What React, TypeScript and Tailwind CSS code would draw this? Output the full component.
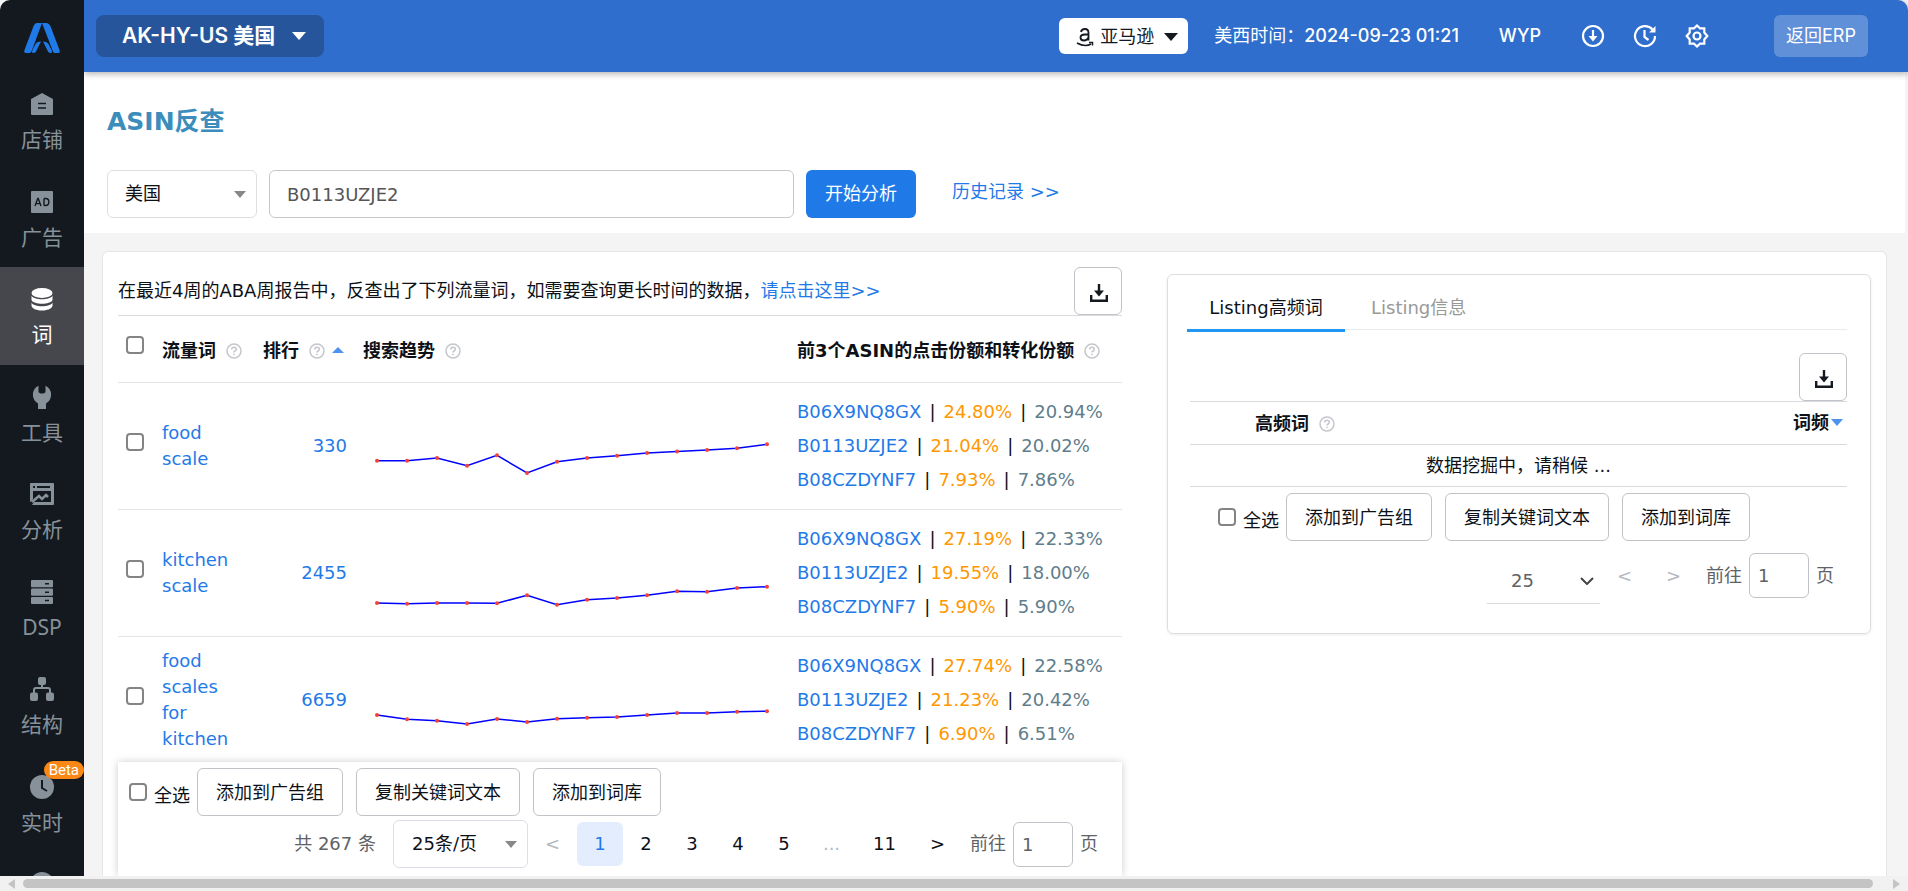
import type { ReactNode } from "react";

const navItems = [
  { label: "店铺", icon: "store" },
  { label: "广告", icon: "ad" },
  { label: "词", icon: "word", active: true },
  { label: "工具", icon: "tool" },
  { label: "分析", icon: "chart" },
  { label: "DSP", icon: "dsp" },
  { label: "结构", icon: "tree" },
  { label: "实时", icon: "clock", badge: "Beta" },
];

const rows = [
  {
    word: "food scale",
    rank: 330,
    trend: [64.7, 64.7, 62, 69.7, 59.3, 77, 65.7, 62, 59.8, 57, 55.5, 54, 52.3, 48.3],
    asins: [
      ["B06X9NQ8GX", "24.80%", "20.94%"],
      ["B0113UZJE2", "21.04%", "20.02%"],
      ["B08CZDYNF7", "7.93%", "7.86%"],
    ],
  },
  {
    word: "kitchen scale",
    rank: 2455,
    trend: [80, 80.7, 80, 80, 80.3, 72.3, 81.7, 76.7, 75, 72.3, 68.3, 68.7, 65, 63.7],
    asins: [
      ["B06X9NQ8GX", "27.19%", "22.33%"],
      ["B0113UZJE2", "19.55%", "18.00%"],
      ["B08CZDYNF7", "5.90%", "5.90%"],
    ],
  },
  {
    word: "food scales for kitchen",
    rank: 6659,
    trend: [65, 69.3, 70.7, 74, 69, 72, 68.7, 67.7, 67, 65, 63, 63, 61.7, 61.3],
    asins: [
      ["B06X9NQ8GX", "27.74%", "22.58%"],
      ["B0113UZJE2", "21.23%", "20.42%"],
      ["B08CZDYNF7", "6.90%", "6.51%"],
    ],
  },
];

const navIcons: Record<string, ReactNode> = {
  store: (
    <>
      <path d="M12 1 22 6.5a1 1 0 0 1 1 1V22a1 1 0 0 1-1 1H2a1 1 0 0 1-1-1V7.5a1 1 0 0 1 1-1Z" fill="currentColor" />
      <path d="M8 11.5h8M8 16h8" stroke="#14191f" strokeWidth="1.5" />
    </>
  ),
  ad: (
    <>
      <rect x="1" y="1" width="22" height="22" rx="1" fill="currentColor" />
      <path
        d="M5 16l2.8-7.5h.4L11 16M6 13.6h4M14 8.5v7M14 8.5h1.5c4.500 0 4.500 7 0 7H14"
        stroke="#14191f"
        strokeWidth="1.4"
        fill="none"
      />
    </>
  ),
  word: (
    <>
      <ellipse cx="12" cy="6" rx="10.5" ry="5" fill="currentColor" />
      <path d="M1.5 8.5c2 5 19 5 21 0v4.5c-2 5-19 5-21 0Z" fill="currentColor" />
      <path d="M1.5 15.5c2 5 19 5 21 0V19c-2 6-19 6-21 0Z" fill="currentColor" />
    </>
  ),
  tool: (
    <path
      d="M8.500 .8v6.400l2 1.300h3l2-1.300V.8A10 10 0 0 1 16 18.500v5a1 1 0 0 1-1 1H9a1 1 0 0 1-1-1v-5A10 10 0 0 1 8.500 .8Z"
      fill="currentColor"
    />
  ),
  chart: (
    <>
      <path
        fillRule="evenodd"
        d="M1 1h22a1 1 0 0 1 1 1v20a1 1 0 0 1-1 1H2l2-3h17V9H3v8l-2 3a1 1 0 0 1-1-1V2a1 1 0 0 1 1-1Zm2 3v2h2V4Zm4 0v2h13V4Z"
        fill="currentColor"
      />
      <path d="M2 20l7-6 3 3 4-4 2 2" stroke="currentColor" strokeWidth="2.5" fill="none" />
    </>
  ),
  dsp: (
    <>
      <rect x="1" y="0" width="22" height="7.3" rx="1" fill="currentColor" />
      <rect x="1" y="8.5" width="22" height="7.3" rx="1" fill="currentColor" />
      <rect x="1" y="17" width="22" height="7" rx="1" fill="currentColor" />
      <path d="M15 3.8h4M15 12.2h4M15 20.5h4" stroke="#14191f" strokeWidth="1.5" />
    </>
  ),
  tree: (
    <>
      <rect x="8" y="0" width="8" height="8" rx="2" fill="currentColor" />
      <rect x="0" y="15.5" width="8" height="8.5" rx="2" fill="currentColor" />
      <rect x="16" y="15.5" width="8" height="8.5" rx="2" fill="currentColor" />
      <path d="M4 16v-3q0-2 2-2h12q2 0 2 2v3M12 7v4" stroke="currentColor" strokeWidth="2" fill="none" />
    </>
  ),
  clock: (
    <>
      <circle cx="12" cy="12" r="12" fill="currentColor" />
      <path d="M12 5v8l5 3" stroke="#14191f" strokeWidth="2" fill="none" />
    </>
  ),
};

function Sidebar() {
  return (
    <aside className="w-[84px] shrink-0 overflow-hidden rounded-tl-[10px] bg-[#14191f] font-['Noto_Sans','Noto_Sans_CJK_SC',sans-serif]">
      <div className="flex h-[72px] items-center justify-center pt-1">
        <svg viewBox="0 0 36 32" className="h-8 w-9" fill="#1f7ae8">
          <path d="M13 1h5L7.5 29.5Q6.5 31 5 31H2Q-.5 31 .5 28L9 5.5Q10.5 1 13 1Z" />
          <path d="M18 1h4q3.5 0 5 4.5L35.5 28q1 3-1.5 3h-3q-1.5 0-2-1.5Z" />
          <path d="M17 19.500 12 29.500Q11 31 9.500 31 7.500 31 8 29l3.500-7q1.500-2.500 5.500-2.500Z" />
          <path d="M19 19.500 24 29.500Q25 31 26.500 31 28.500 31 28 29l-3.500-7q-1.500-2.500-5.500-2.500Z" />
        </svg>
      </div>
      <nav className="grid h-[780px] grid-rows-8">
        {navItems.map((item) => (
          <a
            key={item.label}
            href="#"
            className={
              item.active
                ? "relative flex flex-col items-center bg-[#45474d] pt-5 text-white"
                : "relative flex flex-col items-center pt-5 text-[#87919a]"
            }
          >
            <svg viewBox="0 0 24 24" className="size-6">{navIcons[item.icon]}</svg>
            <span className="mt-[9px] text-[21px] leading-7">{item.label}</span>
            {item.badge && (
              <span className="absolute top-1.5 right-0 rounded-full bg-[#fa8816] px-[5px] font-[Roboto] text-[15px] leading-[18px] text-white">
                {item.badge}
              </span>
            )}
          </a>
        ))}
      </nav>
      <svg viewBox="0 0 24 24" className="mx-auto mt-5 size-6 text-[#87919a]">
        <circle cx="12" cy="12" r="12" fill="currentColor" />
      </svg>
    </aside>
  );
}

function Header() {
  return (
    <header className="relative z-10 flex h-[72px] shrink-0 items-center rounded-tr-[10px] bg-[#2f6ecc] pr-10 pl-3 font-[Inter,'Noto_Sans_CJK_SC',sans-serif] text-lg text-white shadow-[0_2px_6px_rgba(0,0,0,0.3)]">
      <button className="flex h-[42px] w-[228px] items-center gap-[17px] rounded-lg bg-[#26559b] pl-[26px] text-[21px] font-semibold">
        AK-HY-US 美国
        <svg viewBox="0 0 14 8" className="h-2 w-3.5" fill="currentColor"><path d="M0 0h14L7 8Z" /></svg>
      </button>
      <button className="ml-auto flex h-9 w-[129px] items-center gap-1.5 rounded-md bg-white pt-0.5 pl-[17px] text-[#14191f]">
        <svg viewBox="0 0 18 20" className="h-5 w-[18px]" fill="none" stroke="currentColor" strokeWidth="1.8">
          <path d="M5 5Q5.500 2 9 2t3.500 4v7.500M12.500 7.500H9q-4.500 0-4.500 3T8 13.500q3 0 4.500-3" />
          <path d="M1 16q8 4.500 14 1" strokeWidth="1.6" />
          <path d="M13 15.500h3.500v3" strokeWidth="1.5" />
        </svg>
        亚马逊
        <svg viewBox="0 0 14 8" className="ml-1 h-2 w-3.5" fill="currentColor"><path d="M0 0h14L7 8Z" /></svg>
      </button>
      <span className="ml-[26px]">美西时间：<span className="font-medium">2024-09-23 01:21</span></span>
      <span className="ml-10 font-medium">WYP</span>
      <div className="ml-10 flex gap-7">
        <svg viewBox="0 0 24 24" className="size-6" fill="none" stroke="currentColor" strokeWidth="2.2">
          <circle cx="12" cy="12" r="10" />
          <path d="M12 6v9" />
          <path d="M7.500 12h9L12 17.500Z" fill="currentColor" stroke="none" />
        </svg>
        <svg viewBox="0 0 24 24" className="size-6" fill="none" stroke="currentColor" strokeWidth="2.2">
          <path d="M19.500 5.500A10 10 0 1 0 22 12M11.500 6v7l4 3" />
          <path d="M22.500 2v6.500H16Z" fill="currentColor" stroke="none" />
        </svg>
        <svg viewBox="0 0 24 24" className="size-6" fill="none" stroke="currentColor" strokeWidth="2.2">
          <path d="M12 1.5l3 2.8h4.3v4.3l3 3.4-3 3.4v4.3H15l-3 2.8-3-2.8H4.7v-4.3l-3-3.4 3-3.4V4.3H9Z" />
          <circle cx="12" cy="12" r="3.5" />
        </svg>
      </div>
      <button className="ml-[65px] h-[42px] w-[94px] rounded-md bg-[#6090d7]">返回ERP</button>
    </header>
  );
}

function HelpIcon() {
  return (
    <svg viewBox="0 0 16 16" className="ml-2.5 inline size-4 align-[-2px] text-[#c4c6cb]" fill="none" stroke="currentColor" strokeWidth="1.5">
      <circle cx="8" cy="8" r="7" />
      <path d="M5.7 6.5q0-2.2 2.3-2.2t2.3 2q0 1-1.2 1.7T8 9.5M8 10.7v1.5" />
    </svg>
  );
}

function DownloadButton() {
  return (
    <button aria-label="下载" className="flex h-12 w-12 shrink-0 items-center justify-center rounded-md border border-[#c0c3c8] bg-white">
      <svg viewBox="0 0 18 18" className="mt-1 ml-0.5 size-[18px]" fill="none" stroke="#14191f" strokeWidth="2.4">
        <path d="M9 0v8M1.200 11v5.800h15.600V11" />
        <path d="M4 6.500h10L9 12.500Z" fill="#14191f" stroke="none" />
      </svg>
    </button>
  );
}

function Check({ id, label }: { id: string; label: string }) {
  return <input id={id} type="checkbox" aria-label={label} className="block size-[18px] appearance-none rounded-[4px] border-2 border-[#848484] bg-white" />;
}

function BulkActions({ id }: { id: string }) {
  return (
    <div className="flex items-center">
      <Check id={id} label="全选" />
      <label htmlFor={id} className="mt-2 mr-[7px] ml-[7px]">全选</label>
      <div className="flex gap-[13px]">
        {["添加到广告组", "复制关键词文本", "添加到词库"].map((text) => (
          <button key={text} className="h-12 rounded-md border border-[#c0c3c8] bg-white px-[18px] pt-0.5">{text}</button>
        ))}
      </div>
    </div>
  );
}

function PageJump({ id }: { id: string }) {
  return (
    <div className="flex items-center text-[#606266]">
      <label htmlFor={id}>前往</label>
      <input id={id} defaultValue="1" className="mx-[7px] h-[45px] w-[60px] rounded-md border border-[#c0c3c8] px-2" />
      <span>页</span>
    </div>
  );
}

function DropArrow() {
  return (
    <svg viewBox="0 0 12 7" className="pointer-events-none absolute top-[21px] right-[11px] h-[7px] w-3" fill="#888">
      <path d="M0 0h12L6 7Z" />
    </svg>
  );
}

function Trend({ values }: { values: number[] }) {
  const points = values.map((y, i) => [14 + i * 30, y]);
  return (
    <svg viewBox="0 0 420 100" className="h-[100px] w-[420px]">
      <polyline points={points.map((p) => p.join(",")).join(" ")} fill="none" stroke="#00f" strokeWidth="1.5" />
      {points.map(([x, y]) => (
        <circle key={x} cx={x} cy={y} r="2" fill="#f44336" />
      ))}
    </svg>
  );
}

function KeywordPanel() {
  return (
    <section className="flex min-h-0 w-[1004px] flex-col">
      <div className="flex items-center justify-between border-b border-[#d8dadd] pt-[15px]">
        <p>
          在最近4周的ABA周报告中，反查出了下列流量词，如需要查询更长时间的数据，
          <a href="#" className="text-[#1f7ae8]">请点击这里&gt;&gt;</a>
        </p>
        <DownloadButton />
      </div>
      <div className="min-h-0 flex-1 overflow-hidden">
        <table className="w-full table-fixed text-left">
          <thead>
            <tr className="h-[66px] border-b border-[#e4e5e7]">
              <th className="w-11 pb-2 pl-2"><Check id="all-words" label="全选流量词" /></th>
              <th className="w-[101px] pt-1">流量词<HelpIcon /></th>
              <th className="w-[100px] pt-1">
                排行<HelpIcon />
                <svg viewBox="0 0 12 6" className="ml-[7px] inline h-1.5 w-3 align-[4px]" fill="#4c93ee"><path d="M0 6h12L6 0Z" /></svg>
              </th>
              <th className="w-[434px] pt-1">搜索趋势<HelpIcon /></th>
              <th className="pt-1">前3个ASIN的点击份额和转化份额<HelpIcon /></th>
            </tr>
          </thead>
          <tbody>
            {rows.map((row) => (
              <tr key={row.word} className="h-[127px] border-b border-[#e4e5e7]">
                <td className="pb-2 pl-2"><Check id={row.word} label={row.word} /></td>
                <td className="pr-5 leading-[26px]"><a href="#" className="block text-[#1f7ae8]">{row.word}</a></td>
                <td className="pr-4 text-right"><a href="#" className="text-[#1f7ae8]">{row.rank}</a></td>
                <td><Trend values={row.trend} /></td>
                <td className="leading-[34px]">
                  {row.asins.map(([asin, click, conversion]) => (
                    <div key={asin}>
                      <a href="#" className="text-[#1f7ae8]">{asin}</a>
                      <span className="mx-2">|</span>
                      <span className="text-[#ff9800]">{click}</span>
                      <span className="mx-2">|</span>
                      <span className="text-[#607d8b]">{conversion}</span>
                    </div>
                  ))}
                </td>
              </tr>
            ))}
          </tbody>
        </table>
      </div>
      <div className="relative h-[114px] shrink-0 bg-white pt-1.5 pl-[11px] shadow-[0_0_8px_rgba(0,0,0,0.2)]">
        <BulkActions id="select-words" />
        <div className="mt-1 flex items-center justify-end pr-6">
          <span className="mr-[17px] text-[#606266]">共 267 条</span>
          <div className="relative">
            <select aria-label="每页条数" className="h-12 w-[135px] appearance-none rounded-md border border-[#dcdfe6] pl-[18px]">
              <option>25条/页</option>
            </select>
            <DropArrow />
          </div>
          <button aria-label="上一页" className="w-[49px] text-[#b4b8bf]">&lt;</button>
          {["1", "2", "3", "4", "5"].map((page) => (
            <button
              key={page}
              className={page === "1" ? "h-11 w-[46px] rounded-md bg-[#e4edfe] text-[#1f7ae8]" : "h-11 w-[46px]"}
            >
              {page}
            </button>
          ))}
          <span className="w-[49px] text-center text-[#b4b8bf]">...</span>
          <button className="w-[57px]">11</button>
          <button aria-label="下一页" className="mr-2 w-[49px]">&gt;</button>
          <PageJump id="jump-words" />
        </div>
      </div>
    </section>
  );
}

function ListingPanel() {
  return (
    <section className="mt-[22px] h-[360px] min-w-0 flex-1 rounded-md border border-[#dcdee2] pt-[18px] pr-[23px] pl-[19px] shadow-[0_1px_3px_rgba(0,0,0,0.08)]">
      <div role="tablist" className="flex h-[37px] border-b border-[#e9ebee]">
        <button role="tab" aria-selected="true" className="h-[39px] w-[158px] border-b-3 border-[#2196f3] pb-1.5">Listing高频词</button>
        <button role="tab" aria-selected="false" className="ml-[26px] pb-1.5 text-[#999]">Listing信息</button>
      </div>
      <div className="mt-[23px] ml-[3px]">
        <div className="flex justify-end"><DownloadButton /></div>
        <table className="w-full">
          <thead>
            <tr className="h-[43px] border-y border-[#d8dadd]">
              <th className="pt-0.5 pl-[65px] text-left">高频词<HelpIcon /></th>
              <th className="pr-1 text-right">
                词频
                <svg viewBox="0 0 12 7" className="ml-0.5 inline h-[7px] w-3 align-[3px]" fill="#4c93ee"><path d="M0 0h12L6 7Z" /></svg>
              </th>
            </tr>
          </thead>
          <tbody>
            <tr className="h-[42px] border-b border-[#d8dadd]">
              <td colSpan={2} className="text-center">数据挖掘中，请稍候 ...</td>
            </tr>
          </tbody>
        </table>
        <div className="pt-1.5 pl-7"><BulkActions id="select-listing" /></div>
      </div>
      <div className="mt-1.5 flex items-center justify-end pr-[13px] text-[#606266]">
        <div className="relative mt-3 border-b border-[#d8dadd]">
          <select aria-label="每页条数" className="h-11 w-[113px] appearance-none pl-6">
            <option>25</option>
          </select>
          <svg viewBox="0 0 14 8" className="pointer-events-none absolute top-[18px] right-1.5 h-2 w-3.5" fill="none" stroke="#444" strokeWidth="2">
            <path d="M1 1l6 6 6-6" />
          </svg>
        </div>
        <button aria-label="上一页" className="w-[49px] text-[#b4b8bf]">&lt;</button>
        <button aria-label="下一页" className="mr-2 w-[49px] text-[#b4b8bf]">&gt;</button>
        <PageJump id="jump-listing" />
      </div>
    </section>
  );
}

export default function App() {
  return (
    <div className="flex h-screen flex-col overflow-hidden bg-[#f4f4f4] font-['DejaVu_Sans','Noto_Sans_CJK_SC',sans-serif] text-lg text-[#0d1117]">
      <div className="flex min-h-0 flex-1">
        <Sidebar />
        <main className="flex min-w-0 flex-1 flex-col overflow-hidden">
          <Header />
          <section className="mr-[3px] h-[161px] shrink-0 bg-white pt-8 pl-[23px]">
            <h1 className="text-[25px] leading-9 font-bold text-[#3c8dbc]">ASIN反查</h1>
            <form className="mt-[30px] flex items-center gap-3">
              <div className="relative">
                <select aria-label="站点" className="h-12 w-[150px] appearance-none rounded-md border border-[#dcdee2] pl-[17px]">
                  <option>美国</option>
                </select>
                <DropArrow />
              </div>
              <input aria-label="ASIN" defaultValue="B0113UZJE2" className="h-12 w-[525px] rounded-md border border-[#c6c8cc] px-[17px] text-[#555]" />
              <button type="button" className="h-12 w-[110px] rounded-md bg-[#1f7ae8] text-white">开始分析</button>
              <a href="#" className="ml-6 pb-1 text-[#1f7ae8]">历史记录 &gt;&gt;</a>
            </form>
          </section>
          <div className="mt-[18px] mr-[21px] ml-[18px] flex min-h-0 flex-1 gap-[45px] rounded-t-md border border-b-0 border-[#e5e6e8] bg-white px-[15px]">
            <KeywordPanel />
            <ListingPanel />
          </div>
        </main>
      </div>
      <div className="flex h-[15px] shrink-0 items-center justify-between bg-[#f1f1f1] px-2">
        <svg viewBox="0 0 7 10" className="h-2.5 w-[7px]" fill="#c4c4c4"><path d="M7 0v10L0 5Z" /></svg>
        <div className="mr-5 ml-2 h-[9px] flex-1 rounded-full bg-[#c4c4c4]" />
        <svg viewBox="0 0 7 10" className="h-2.5 w-[7px]" fill="#c4c4c4"><path d="M0 0v10l7-5Z" /></svg>
      </div>
    </div>
  );
}
